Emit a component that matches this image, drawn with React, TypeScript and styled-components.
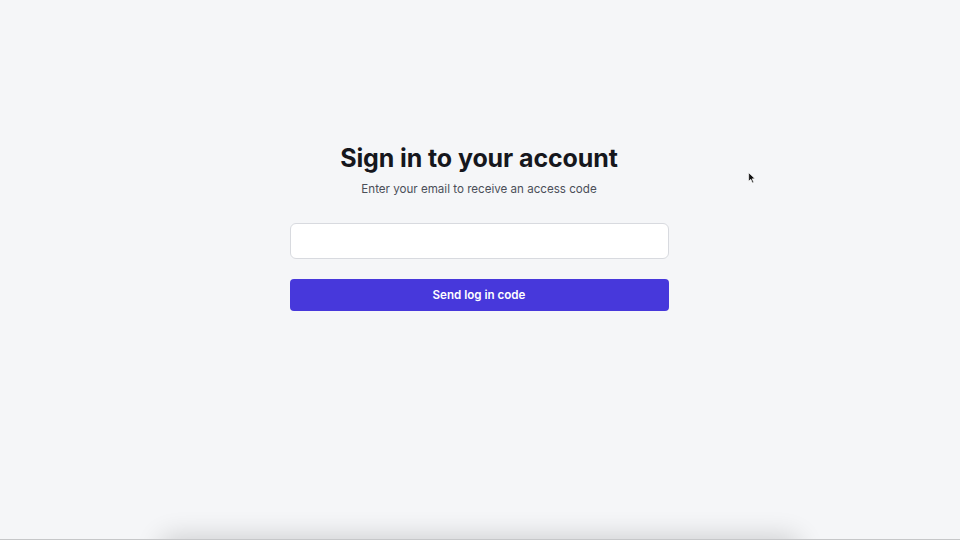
import { useState } from "react"
import styled, { createGlobalStyle } from "styled-components"

const GlobalStyle = createGlobalStyle`
  html, body {
    margin: 0;
    padding: 0;
    background: #f5f6f8;
    font-family: Inter, "Noto Sans", Arial, sans-serif;
    -webkit-font-smoothing: antialiased;
  }
  * { box-sizing: border-box; }
`

export default function App() {
  const [email, setEmail] = useState('')

  return (<>
    <GlobalStyle />
    <StyledPage>
      <Form onSubmit={e => e.preventDefault()}>
        <Title>Sign in to your account</Title>
        <Subtitle>Enter your email to receive an access code</Subtitle>

        <EmailInput
          type="email"
          value={email}
          onChange={e => setEmail(e.target.value)}
          aria-label="Email"
        />

        <SubmitButton type="submit">Send log in code</SubmitButton>
      </Form>

      {/* sheet peeking up from below the fold */}
      <BottomSheet />
      <BottomEdge />

      <Cursor viewBox="0 0 12 18" aria-hidden>
        <path d="M1 1 L1 14 L4.2 11 L6.6 16.4 L8.6 15.5 L6.3 10.3 L10.6 10.3 Z" fill="#111" stroke="#fff" strokeWidth="1" strokeLinejoin="round" />
      </Cursor>
    </StyledPage>
  </>)
}

const StyledPage = styled.main`
  position: relative;
  height: 540px;
  overflow: hidden;
  display: flex;
  justify-content: center;
  padding-top: 142px;
  padding-right: 2px;
`

const Form = styled.form`
  width: 379px;
  display: flex;
  flex-direction: column;
  align-items: center;
`

const Title = styled.h1`
  margin: 0;
  font-size: 25px;
  line-height: 32px;
  font-weight: 700;
  color: #16171d;
  letter-spacing: -0.1px;
`

const Subtitle = styled.p`
  margin: 6px 0 0;
  font-size: 11.6px;
  line-height: 18px;
  color: #4b4f58;
`

const EmailInput = styled.input`
  margin-top: 25px;
  width: 100%;
  height: 36px;
  border: 1px solid #d8dadf;
  border-radius: 6px;
  background: #fff;
  padding: 0 12px;
  font: inherit;
  font-size: 13px;
  outline: none;
`

const SubmitButton = styled.button`
  margin-top: 20px;
  width: 100%;
  height: 32px;
  border: none;
  border-radius: 4px;
  background: #4738db;
  color: #fff;
  font-family: inherit;
  font-size: 11.6px;
  font-weight: 600;
  cursor: pointer;
`

const BottomSheet = styled.div`
  position: absolute;
  left: 160px;
  right: 160px;
  top: 540px;
  height: 40px;
  border-radius: 12px;
  box-shadow: 0 -4px 26px rgba(0, 0, 0, 0.16);
`

const BottomEdge = styled.div`
  position: absolute;
  left: 0;
  right: 0;
  bottom: 0;
  height: 1px;
  background: #c6c7c9;
`

const Cursor = styled.svg`
  position: absolute;
  left: 748px;
  top: 172px;
  width: 8px;
  height: 12px;
`
